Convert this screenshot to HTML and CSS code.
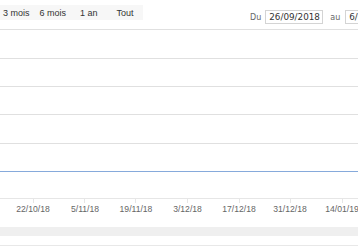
FILE: index.html
```html
<!DOCTYPE html>
<html lang="fr">
<head>
<meta charset="utf-8">
<link rel="stylesheet" href="styles.css">
</head>
<body>
<div class="chart">
  <div class="toolbar">
    <div class="ranges">
      <span class="btn b1">3 mois</span>
      <span class="btn b2">6 mois</span>
      <span class="btn b3">1 an</span>
      <span class="btn b4">Tout</span>
    </div>
    <div class="dates">
      <span class="lbl">Du</span>
      <span class="inp">26/09/2018</span>
      <span class="lbl au">au</span>
      <span class="inp">6/02/2019</span>
    </div>
  </div>
  <svg class="plot" width="358" height="218" viewBox="0 0 358 218">
    <g class="grid">
      <line x1="0" y1="0.5" x2="358" y2="0.5"/>
      <line x1="0" y1="29.5" x2="358" y2="29.5"/>
      <line x1="0" y1="57.5" x2="358" y2="57.5"/>
      <line x1="0" y1="85.5" x2="358" y2="85.5"/>
      <line x1="0" y1="114.5" x2="358" y2="114.5"/>
    </g>
    <line class="series" x1="0" y1="142.5" x2="358" y2="142.5"/>
    <line class="axis" x1="0" y1="169.5" x2="358" y2="169.5"/>
    <g class="ticks">
      <line x1="33.5" y1="170" x2="33.5" y2="174"/>
      <line x1="84.5" y1="170" x2="84.5" y2="174"/>
      <line x1="135.5" y1="170" x2="135.5" y2="174"/>
      <line x1="187.5" y1="170" x2="187.5" y2="174"/>
      <line x1="239.5" y1="170" x2="239.5" y2="174"/>
      <line x1="290.5" y1="170" x2="290.5" y2="174"/>
      <line x1="342.5" y1="170" x2="342.5" y2="174"/>
    </g>
    <g class="labels">
      <text x="33" y="183">22/10/18</text>
      <text x="85" y="183">5/11/18</text>
      <text x="136" y="183">19/11/18</text>
      <text x="187.5" y="183">3/12/18</text>
      <text x="239" y="183">17/12/18</text>
      <text x="290" y="183">31/12/18</text>
      <text x="342" y="183">14/01/19</text>
    </g>
    <rect class="scrollbar" x="0" y="198" width="358" height="9"/>
    <line class="navline" x1="0" y1="216.5" x2="358" y2="216.5"/>
  </svg>
</div>
</body>
</html>
```
FILE: styles.css
```css
html, body {
  margin: 0;
  padding: 0;
  background: #fff;
  overflow: hidden;
}
body {
  width: 358px;
  height: 247px;
  font-family: "Liberation Sans", Arial, sans-serif;
}
.chart {
  width: 358px;
  height: 247px;
  display: flex;
  flex-direction: column;
  overflow: hidden;
}
.toolbar {
  height: 29px;
  display: flex;
  align-items: flex-start;
  flex-shrink: 0;
}
.ranges {
  flex-shrink: 0;
  margin-top: 5px;
  height: 15px;
  width: 143px;
  background: #f7f7f7;
  display: flex;
  align-items: center;
  font-size: 9px;
  color: #333;
}
.btn {
  white-space: nowrap;
}
.b1 { margin-left: 3px; }
.b2 { margin-left: 10px; }
.b3 { margin-left: 14px; }
.b4 { margin-left: 19px; }
.dates {
  flex-shrink: 0;
  display: flex;
  align-items: center;
  margin-left: 107px;
  margin-top: 10px;
  font-family: "DejaVu Sans", Verdana, sans-serif;
  font-size: 8.8px;
  color: #333;
  white-space: nowrap;
}
.lbl {
  color: #666;
  font-size: 8px;
  margin-right: 4px;
}
.au {
  margin-left: 7px;
  margin-right: 5px;
}
.inp {
  flex-shrink: 0;
  border: 1px solid #d4d4d4;
  height: 12px;
  line-height: 12px;
  padding: 0 3px;
  width: 50px;
  color: #333;
}
.plot {
  display: block;
  flex-shrink: 0;
}
.grid line {
  stroke: #e0e0e0;
  stroke-width: 1;
}
.series {
  stroke: #86aadb;
  stroke-width: 1;
}
.axis {
  stroke: #e6e6e6;
  stroke-width: 1;
}
.ticks line {
  stroke: #e6e6e6;
  stroke-width: 1;
}
.labels text {
  font-family: "Liberation Sans", Arial, sans-serif;
  font-size: 8.6px;
  fill: #666;
  text-anchor: middle;
}
.scrollbar {
  fill: #efefef;
}
.navline {
  stroke: #e8e8e8;
  stroke-width: 1;
}
```
